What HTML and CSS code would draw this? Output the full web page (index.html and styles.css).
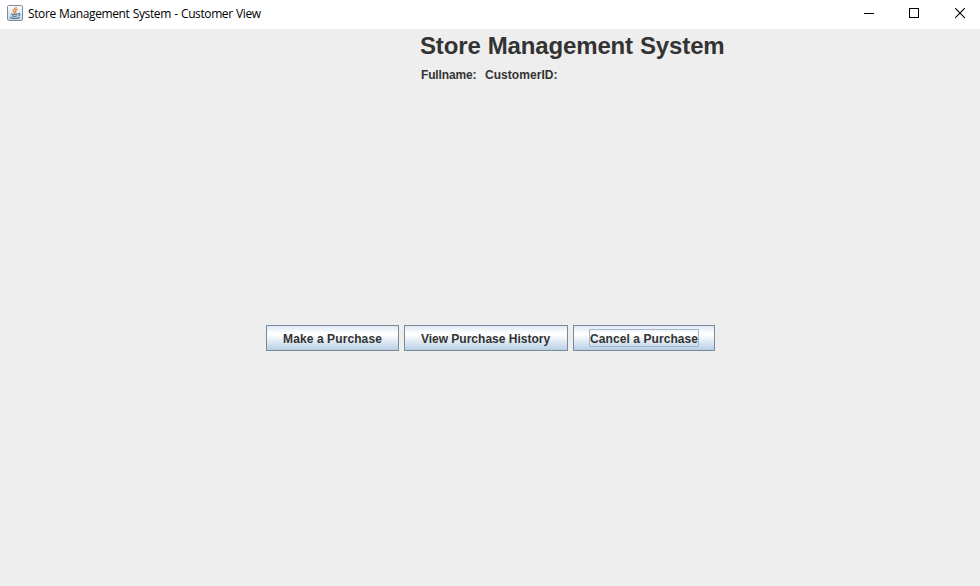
FILE: index.html
```html
<!DOCTYPE html>
<html lang="en">
<head>
<meta charset="utf-8">
<title>Store Management System - Customer View</title>
<link rel="stylesheet" href="styles.css">
</head>
<body>
<div class="window">
  <header class="titlebar">
    <svg class="app-icon" width="16" height="16" viewBox="0 0 16 16">
      <defs>
        <linearGradient id="tile" x1="0" y1="0" x2="0" y2="1">
          <stop offset="0" stop-color="#fbfcfd"/>
          <stop offset="1" stop-color="#cbd5dd"/>
        </linearGradient>
      </defs>
      <rect x=".5" y=".5" width="15" height="15" rx="1.2" fill="url(#tile)" stroke="#7890a4"/>
      <path d="M9.2 1.8C9.6 3.6 6 4 6.3 5.8C6.5 6.6 7.6 7 7.2 8.1M10.6 4.1C9 4.8 8 5.3 8.6 6.3C9 7 9 7.4 8.2 8.1" fill="none" stroke="#e58a43" stroke-width="1.3"/>
      <path d="M4 8.9C5 9.7 9 9.5 10.5 8.9M11 8.6C13.8 8.1 13.3 10.6 10.8 11M4.9 10.8C6.2 11.4 8.7 11.3 10 10.7M3.6 12.1C1.8 13.4 10 13.9 12.9 12.4" fill="none" stroke="#50789b" stroke-width="1.2"/>
    </svg>
    <span class="caption">Store Management System - Customer View</span>
    <div class="controls">
      <svg class="minimize" width="11" height="11" viewBox="0 0 11 11" shape-rendering="crispEdges"><path d="M0 5.5H10" stroke="#000"/></svg>
      <svg width="11" height="11" viewBox="0 0 11 11" shape-rendering="crispEdges"><rect x=".5" y=".5" width="9" height="9" fill="none" stroke="#000"/></svg>
      <svg width="11" height="11" viewBox="0 0 11 11"><path d="M.2 .2L9.8 9.8M9.8 .2L.2 9.8" stroke="#000" stroke-width="1.15"/></svg>
    </div>
  </header>
  <main class="content">
    <section class="heading">
      <h1>Store Management System</h1>
      <div class="customer"><span class="fullname">Fullname:</span><span class="customer-id">CustomerID:</span></div>
    </section>
    <nav class="actions">
      <button class="make"><span>Make a Purchase</span></button>
      <button class="history"><span>View Purchase History</span></button>
      <button class="cancel"><span class="focused">Cancel a Purchase</span></button>
    </nav>
  </main>
</div>
</body>
</html>
```
FILE: styles.css
```css
* { box-sizing: border-box; }
body { margin: 0; }
.window {
  width: 980px;
  height: 586px;
  display: flex;
  flex-direction: column;
  background: #eee;
  color: #333;
  overflow: hidden;
  font-family: "Liberation Sans", Arial, sans-serif;
}
.titlebar {
  height: 29px;
  flex: none;
  display: flex;
  align-items: flex-start;
  padding: 5px 14px 0 7px;
  background: #fff;
  color: #000;
}
.app-icon { display: block; }
.caption {
  margin-left: 5px;
  font: 12px/17px "Open Sans", "Noto Sans", sans-serif;
  letter-spacing: -0.39px;
  word-spacing: 0.6px;
  white-space: nowrap;
}
.controls {
  display: flex;
  gap: 35px;
  margin: 3px 0 0 auto;
}
.controls svg { display: block; }
.controls .minimize { margin-right: -1px; }
.content { padding-top: 3px; }
.heading { margin-left: 420px; }
h1 {
  margin: 0;
  font-size: 24px;
  line-height: 28px;
  font-weight: bold;
  letter-spacing: -0.14px;
  word-spacing: 0.5px;
  white-space: nowrap;
}
.customer {
  display: flex;
  margin-top: 8px;
  font: bold 12px/14px "Liberation Sans", Arial, sans-serif;
}
.fullname { width: 65px; padding-left: 1px; letter-spacing: -0.15px; }
.customer-id { letter-spacing: 0.05px; }
.actions {
  display: flex;
  gap: 5px;
  margin: 243px 0 0 266px;
}
button {
  height: 26px;
  padding: 0;
  display: flex;
  align-items: center;
  justify-content: center;
  border: 1px solid #7a8a99;
  border-radius: 0;
  background: linear-gradient(#dde8f3 0%, #fff 30%, #fff 36%, #b8cfe5 100%);
  color: #333;
  font: bold 12px/14px "Liberation Sans", Arial, sans-serif;
  white-space: nowrap;
}
button span { border: 1px solid transparent; padding-top: 2px; }
button .focused {
  width: 110px;
  border-color: #a3b8cc;
}
.make { width: 133px; letter-spacing: 0.1px; }
.history { width: 164px; padding-right: 1px; }
.cancel { width: 142px; letter-spacing: 0.08px; }
```
